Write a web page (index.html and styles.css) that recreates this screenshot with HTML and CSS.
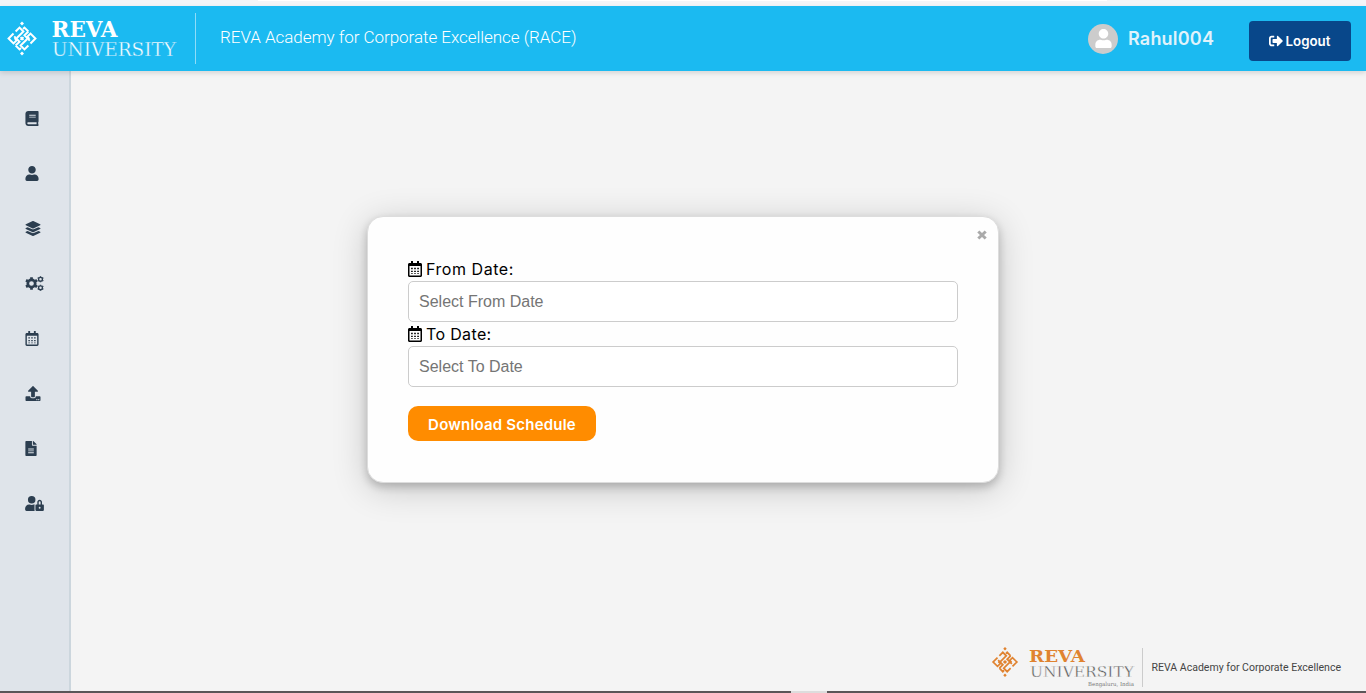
FILE: index.html
```html
<!DOCTYPE html>
<html lang="en">
<head>
<meta charset="utf-8">
<title>REVA Academy for Corporate Excellence</title>
<link rel="stylesheet" href="styles.css">
</head>
<body>
<svg class="defs" aria-hidden="true">
  <symbol id="logo-knot" viewBox="0 0 34 34">
    <g fill="none" stroke="currentColor" stroke-width="2" transform="rotate(45 17 17)">
      <path d="M7.500 19.500V26.500H14.500V22H11.500M26.500 14.500V7.500H19.500V12H22.500"/>
      <path d="M7.500 16.500V11H13V20M26.500 17.500V23H21V14M16.500 7.500H11V9.500M16.500 7.500V13H24M17.500 26.500H23V24.500M17.500 26.500V21H10M15 17H19M17 15V19"/>
    </g>
    <path fill="currentColor" d="m17 0 2 2-2 2-2-2zM17 30l2 2-2 2-2-2z"/>
  </symbol>
  <symbol id="calendar" viewBox="0 0 448 512">
    <path fill="currentColor" fill-rule="evenodd" d="M400 64h-48V12c0-7-5-12-12-12h-40c-7 0-12 5-12 12v52H160V12c0-7-5-12-12-12h-40c-7 0-12 5-12 12v52H48C21 64 0 85 0 112v352c0 27 21 48 48 48h352c27 0 48-21 48-48V112c0-27-21-48-48-48zm-6 400H54c-3 0-6-3-6-6V160h352v298c0 3-3 6-6 6zM100 216h52v44h-52zm98 0h52v44h-52zm98 0h52v44h-52zM100 310h52v44h-52zm98 0h52v44h-52zm98 0h52v44h-52zM100 394h52v20h-52zm98 0h52v20h-52zm98 0h52v20h-52z"/>
  </symbol>
  <symbol id="user" viewBox="0 0 448 512">
    <path fill="currentColor" d="M224 256c70.700 0 128-57.300 128-128S294.700 0 224 0 96 57.300 96 128s57.300 128 128 128zm89.600 32h-16.700c-22.200 10.200-46.900 16-72.900 16s-50.600-5.800-72.900-16h-16.700C60.200 288 0 348.200 0 422.400V464c0 26.500 21.500 48 48 48h352c26.500 0 48-21.500 48-48v-41.600c0-74.200-60.200-134.400-134.400-134.400z"/>
  </symbol>
</svg>

<div class="top-strip"><div class="top-strip-tab"></div></div>
<header class="header">
  <svg class="brand" width="200" height="65" viewBox="0 0 200 65">
    <use href="#logo-knot" x="5" y="15" width="34" height="35"/>
    <text class="brand-name" x="51.500" y="31" textLength="66" lengthAdjust="spacingAndGlyphs">REVA</text>
    <text class="brand-sub" x="52" y="50" textLength="124" lengthAdjust="spacingAndGlyphs">UNIVERSITY</text>
    <path class="brand-rule" d="M195.500 7v51"/>
  </svg>
  <div class="header-title">REVA Academy for Corporate Excellence (RACE)</div>
  <div class="account">
    <span class="avatar"><svg width="17" height="19" viewBox="0 0 448 512"><use href="#user" width="448" height="512"/></svg></span>
    <span class="account-name">Rahul004</span>
  </div>
  <button class="logout">
    <svg width="14" height="14" viewBox="0 0 512 512"><path fill="currentColor" d="m497 273-168 168c-15 15-41 4.500-41-17v-96H152c-13 0-24-11-24-24v-96c0-13 11-24 24-24h136V88c0-21 26-32 41-17l168 168c9 9 9 25 0 34zM192 436v-40c0-7-5-12-12-12H96c-18 0-32-14-32-32V160c0-18 14-32 32-32h84c7 0 12-5 12-12V76c0-7-5-12-12-12H96c-53 0-96 43-96 96v192c0 53 43 96 96 96h84c7 0 12-5 12-12z"/></svg>
    <span class="logout-label">Logout</span>
  </button>
</header>

<div class="body">
  <nav class="sidebar">
    <a class="nav-item"><svg width="14" height="15" viewBox="0 0 448 512"><path fill="currentColor" d="M448 360V24c0-13.300-10.700-24-24-24H96C43 0 0 43 0 96v320c0 53 43 96 96 96h328c13.300 0 24-10.700 24-24v-16c0-7.500-3.500-14.300-8.900-18.700-4.200-15.400-4.200-59.300 0-74.700 5.400-4.300 8.900-11.100 8.900-18.600zM128 134c0-3.300 2.700-6 6-6h212c3.300 0 6 2.700 6 6v20c0 3.300-2.700 6-6 6H134c-3.300 0-6-2.700-6-6v-20zm0 64c0-3.300 2.700-6 6-6h212c3.300 0 6 2.700 6 6v20c0 3.300-2.700 6-6 6H134c-3.300 0-6-2.700-6-6v-20zm253.400 250H96c-17.700 0-32-14.300-32-32 0-17.600 14.400-32 32-32h285.400c-1.900 17.100-1.900 46.900 0 64z"/></svg></a>
    <a class="nav-item"><svg width="14" height="15"><use href="#user"/></svg></a>
    <a class="nav-item"><svg width="16" height="15" viewBox="0 0 512 512"><path fill="currentColor" d="M12.410 148.020l232.940 105.670c6.800 3.090 14.490 3.090 21.290 0l232.940-105.670c16.550-7.510 16.550-32.520 0-40.030L266.650 2.310a25.607 25.607 0 0 0-21.290 0L12.410 107.980c-16.550 7.510-16.550 32.530 0 40.040zm487.180 88.280l-58.090-26.330-161.640 73.270c-7.560 3.430-15.590 5.170-23.860 5.170s-16.290-1.740-23.860-5.170L70.510 209.970l-58.100 26.330c-16.550 7.500-16.550 32.500 0 40l232.940 105.590c6.800 3.080 14.490 3.080 21.290 0L499.590 276.300c16.550-7.500 16.550-32.500 0-40zm0 127.800l-57.870-26.230-161.860 73.370c-7.560 3.430-15.590 5.170-23.860 5.170s-16.290-1.740-23.860-5.170L70.290 337.870 12.410 364.100c-16.550 7.500-16.550 32.500 0 40l232.940 105.590c6.800 3.080 14.490 3.080 21.290 0L499.590 404.100c16.550-7.500 16.550-32.500 0-40z"/></svg></a>
    <a class="nav-item"><svg width="19" height="15" viewBox="0 0 19 15"><g fill="none" stroke="currentColor"><circle cx="6.500" cy="7.500" r="3.700" stroke-width="2.700"/><path stroke-width="2.700" d="M6.500 1.200v2M6.500 11.800v2M1 4.300l1.800 1M10.200 9.700l1.800 1M1 10.700l1.800-1M10.200 5.300l1.800-1"/><circle cx="15.500" cy="3.300" r="1.900" stroke-width="1.300"/><circle cx="15.500" cy="11.700" r="1.900" stroke-width="1.300"/><path stroke-width="1.400" d="M15.500.2v1M15.500 5.300v1M12.700 1.700l1 .6M17.300 4.300l1 .6M12.700 4.900l1-.6M17.300 2.300l1-.6M15.500 8.700v1M15.500 13.800v1M12.700 10.100l1 .6M17.300 12.700l1 .6M12.700 13.300l1-.6M17.300 10.700l1-.6"/></g></svg></a>
    <a class="nav-item"><svg width="14" height="15"><use href="#calendar"/></svg></a>
    <a class="nav-item"><svg width="16" height="15" viewBox="0 0 512 512"><path fill="currentColor" fill-rule="evenodd" d="M296 384h-80c-13 0-24-11-24-24V192h-88c-18 0-27-21-14-34L242 6c8-8 20-8 28 0l152 152c13 13 4 34-14 34h-88v168c0 13-11 24-24 24zm216-8v112c0 13-11 24-24 24H24c-13 0-24-11-24-24V376c0-13 11-24 24-24h136v8c0 31 25 56 56 56h80c31 0 56-25 56-56v-8h136c13 0 24 11 24 24zM388 444a20 20 0 1 0 .1 0zM452 444a20 20 0 1 0 .1 0z"/></svg></a>
    <a class="nav-item"><svg width="12" height="15" viewBox="0 0 384 512"><path fill="currentColor" fill-rule="evenodd" d="M224 136V0H24C11 0 0 11 0 24v464c0 13 11 24 24 24h336c13 0 24-11 24-24V160H248c-13 0-24-11-24-24zm64 280H96v-32h192zm0-64H96v-32h192zm0-64H96v-32h192zM384 122v6H256V0h6c6 0 12 3 17 7l98 98c4 5 7 11 7 17z"/></svg></a>
    <a class="nav-item"><svg width="19" height="15" viewBox="0 0 640 512"><path fill="currentColor" fill-rule="evenodd" d="M224 256a128 128 0 1 0 0-256 128 128 0 0 0 0 256zm96 64c0-12 3-23 9-32-5 0-10-1-15-1h-17a174 174 0 0 1-146 0h-17C60 288 0 348 0 422v42c0 27 21 48 48 48h280c-5-9-8-20-8-32zm288-32h-32v-80c0-44-36-80-80-80s-80 36-80 80v80h-32c-18 0-32 14-32 32v160c0 18 14 32 32 32h224c18 0 32-14 32-32V320c0-18-14-32-32-32zM496 432a32 32 0 1 1 0-64 32 32 0 0 1 0 64zm32-144h-64v-80a32 32 0 0 1 64 0z"/></svg></a>
  </nav>
  <main class="main">
    <section class="dialog">
      <svg class="close" width="10" height="10" viewBox="0 0 10 10"><path fill="none" stroke="currentColor" stroke-width="3" d="m1.300 1.500 7.400 7M8.700 1.500l-7.400 7"/></svg>
      <label class="label"><svg width="14" height="16"><use href="#calendar"/></svg><span class="label-from">From Date:</span></label>
      <input class="field" placeholder="Select From Date">
      <label class="label"><svg width="14" height="16"><use href="#calendar"/></svg><span class="label-to">To Date:</span></label>
      <input class="field" placeholder="Select To Date">
      <button class="download"><span>Download Schedule</span></button>
    </section>
    <footer class="footer">
      <svg width="360" height="46" viewBox="0 0 360 46">
        <use class="orange" href="#logo-knot" x="0" y="2" width="30" height="30"/>
        <text class="foot-name orange" x="39" y="16.500" textLength="56" lengthAdjust="spacingAndGlyphs">REVA</text>
        <text class="foot-sub" x="40" y="32" textLength="104" lengthAdjust="spacingAndGlyphs">UNIVERSITY</text>
        <text class="foot-city" x="98" y="41" textLength="46" lengthAdjust="spacingAndGlyphs">Bengaluru, India</text>
        <path stroke="#ccc" d="M152.500 3v39"/>
        <text class="foot-title" x="161.500" y="25.500" textLength="189.500" lengthAdjust="spacingAndGlyphs">REVA Academy for Corporate Excellence</text>
      </svg>
    </footer>
  </main>
</div>
<div class="bottom-strip"><div class="bottom-strip-thumb"></div></div>
</body>
</html>
```
FILE: styles.css
```css
* { box-sizing: border-box; }
body {
  margin: 0;
  height: 693px;
  display: flex;
  flex-direction: column;
  overflow: hidden;
  background: #f4f4f4;
  font-family: Inter, "Noto Sans", sans-serif;
}
.defs { position: absolute; width: 0; height: 0; }
.top-strip { flex: 0 0 6px; background: #f3f5f8; }
.top-strip-tab { width: 849px; height: 1px; margin-left: 258px; background: #fff; }
.header {
  flex: 0 0 65px;
  display: flex;
  align-items: center;
  padding-right: 15px;
  background: #1bbaf1;
  color: #fff;
  z-index: 1;
  box-shadow: 0 2px 5px rgba(0, 0, 0, .13);
}
.brand { display: block; margin-right: 20px; }
.brand-name { font: 700 21.500px "DejaVu Serif", serif; fill: #fff; }
.brand-sub { font: 300 18.500px "DejaVu Serif", serif; fill: #fff; stroke: #1bbaf1; stroke-width: .4px; }
.brand-rule { stroke: #8fdcf8; }
.header-title { font: 300 17px Roboto, sans-serif; letter-spacing: -.04px; white-space: nowrap; padding-bottom: 3px; }
.account { display: flex; align-items: center; gap: 10px; margin-left: auto; margin-right: 34px; }
.avatar {
  display: flex;
  align-items: center;
  justify-content: center;
  width: 30px;
  height: 30px;
  border-radius: 50%;
  background: #ccc;
}
.account-name { width: 87px; font-size: 18px; font-weight: 600; color: #e1f3fb; white-space: nowrap; letter-spacing: .2px; }
.logout {
  display: flex;
  align-items: center;
  justify-content: center;
  gap: 3px;
  width: 102px;
  height: 40px;
  margin-top: 5px;
  padding: 0 1px 1px 0;
  border: 0;
  border-radius: 4px;
  background: #08478a;
  color: #fff;
  font: 600 13.300px Inter, sans-serif;
}
.body { flex: 1; display: flex; min-height: 0; }
.sidebar {
  flex: 0 0 71px;
  padding: 20px 0 0 25px;
  border-right: 2px solid #ccd6dd;
  background: #dfe4ea;
  color: #2c3e50;
}
.nav-item { display: flex; align-items: center; height: 55px; }
.main { flex: 1; display: flex; flex-direction: column; align-items: flex-start; justify-content: space-between; padding: 145px 0 0 296px; }
.dialog {
  position: relative;
  width: 632px;
  height: 267px;
  padding: 40px;
  border: 1px solid #ddd;
  border-radius: 16px;
  background: #fefefe;
  box-shadow: 0 4px 8px rgba(0, 0, 0, .2), 0 6px 35px rgba(0, 0, 0, .19);
}
.close { position: absolute; right: 11px; top: 13px; color: #aaa; }
.label { display: flex; align-items: center; gap: 4px; height: 24px; font-size: 16px; color: #000; }
.label-from { letter-spacing: .55px; }
.label-to { letter-spacing: .35px; }
.field {
  display: block;
  width: 550px;
  height: 41px;
  padding: 0 10px;
  border: 1px solid #ccc;
  border-radius: 5px;
  background: #fff;
  font: 16px "Liberation Sans", sans-serif;
}
.field::placeholder { color: #757575; }
.download {
  width: 188px;
  height: 35px;
  margin-top: 19px;
  padding: 2px 0 0;
  border: 0;
  border-radius: 10px;
  background: #ff8c00;
  color: #fff;
  font: 600 15px Inter, sans-serif;
  letter-spacing: .2px;
}
.footer { margin-left: 623px; height: 46px; }
.orange { color: #e08330; fill: #e08330; }
.foot-name { font: 700 17.500px "DejaVu Serif", serif; }
.foot-sub { font: 15.500px "DejaVu Serif", serif; fill: #555; stroke: #f4f4f4; stroke-width: .4px; }
.foot-city { font: 5.500px "DejaVu Serif", serif; fill: #777; }
.foot-title { font: 400 10.500px Roboto, sans-serif; fill: #444; }
.bottom-strip { flex: 0 0 2px; background: #5a5658; }
.bottom-strip-thumb { width: 36px; height: 2px; margin-left: 791px; background: #ddd; }
```
